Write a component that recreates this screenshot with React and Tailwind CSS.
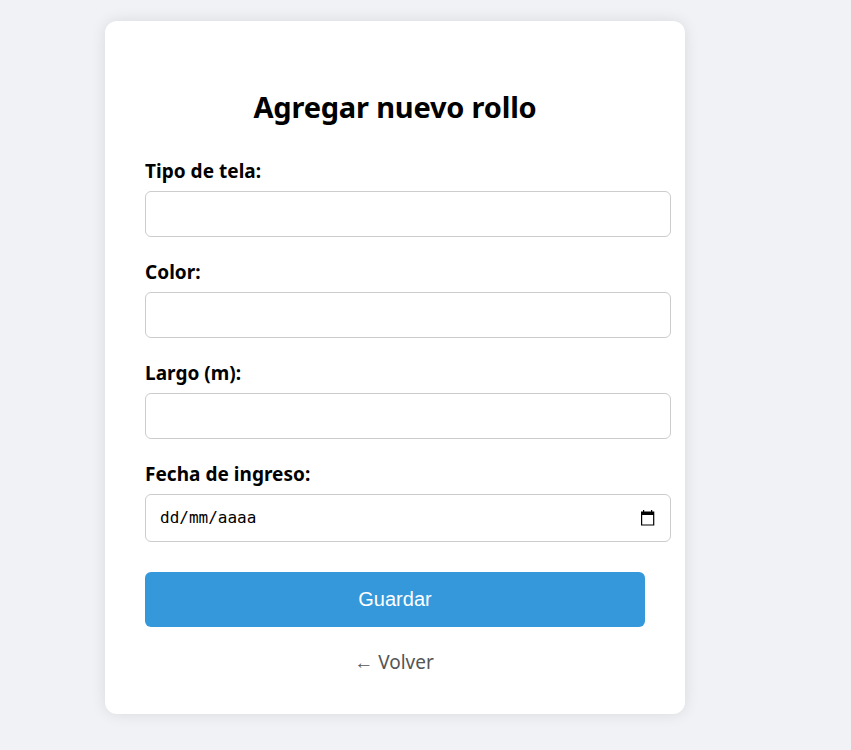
const labelClass =
  "flex h-[27px] items-center self-start whitespace-nowrap pt-[2px] text-[19px] font-bold tracking-[0.03px]";
const inputClass =
  "mt-[7px] w-[526px] rounded-md border border-[#ccc] bg-white outline-none";

function TextField({ label, name }) {
  return (
    <div className="mb-[21px] flex flex-col">
      <label htmlFor={name} className={labelClass}>{label}</label>
      <input id={name} name={name} className={`${inputClass} h-[46px] px-[13px]`} />
    </div>
  );
}

function CalendarIcon() {
  return (
    <svg width="15" height="16" viewBox="0 0 15 16" fill="none">
      <path d="M1 1.6h13.3v14H1z M2.2 5v9.5h10.9V5z" fill="#000" fillRule="evenodd" />
      <path d="M3 0h1.2v2H3z M11 0h1.2v2h-1.2z" fill="#000" />
    </svg>
  );
}

export default function App() {
  return (
    <div className="h-[750px] overflow-hidden bg-[#f0f2f5] pl-[105px] pt-[21px] font-['Noto_Sans','Open_Sans',sans-serif] text-black">
      <main className="flex h-[693px] w-[580px] flex-col rounded-xl bg-white px-10 pt-[65px] shadow-[0_0_15px_rgba(0,0,0,0.1)]">
        <h2 className="mb-[30px] h-[41px] whitespace-nowrap text-center text-[29px] font-bold leading-[41px] tracking-[-0.2px]">
          Agregar nuevo rollo
        </h2>
        <TextField label="Tipo de tela:" name="tipo" />
        <TextField label="Color:" name="color" />
        <TextField label="Largo (m):" name="largo" />
        <div className="flex flex-col">
          <span className={labelClass}>Fecha de ingreso:</span>
          <div className={`${inputClass} flex h-12 items-center justify-between pl-[14px] pr-[15px]`}>
            <span className="font-['DejaVu_Sans_Mono',monospace] text-[16px]">dd/mm/aaaa</span>
            <CalendarIcon />
          </div>
        </div>
        <button className="mt-[30px] h-[55px] w-[500px] rounded-md bg-[#3498db] pb-[2px] font-['Liberation_Sans',Arial,sans-serif] text-[20px] text-white">
          Guardar
        </button>
        <a className="mt-[22px] flex h-[27px] items-center justify-center whitespace-nowrap pr-[2px] font-['Noto_Sans','Open_Sans',sans-serif] text-[19px] text-[#555]">
          ← Volver
        </a>
      </main>
    </div>
  );
}
